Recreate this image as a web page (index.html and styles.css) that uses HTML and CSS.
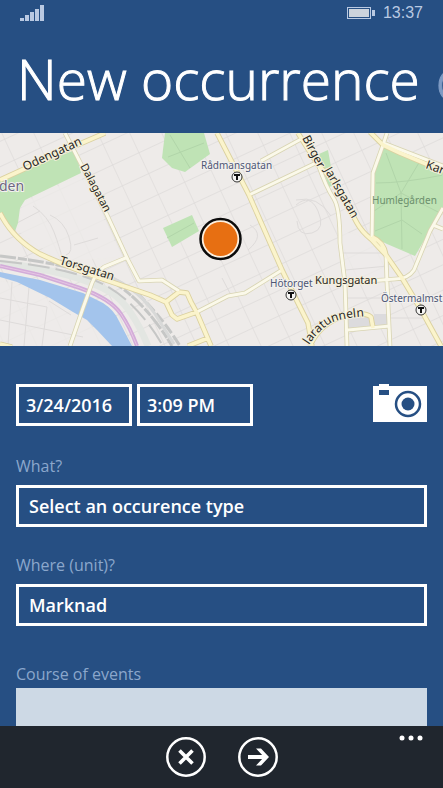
FILE: index.html
```html
<!DOCTYPE html>
<html lang="en">
<head>
  <meta charset="UTF-8">
  <meta name="viewport" content="width=device-width, initial-scale=1.0">
  <title>New occurrence</title>
  <link rel="stylesheet" href="styles.css">
</head>
<body>

  <div class="status">
    <svg width="24" height="17" viewBox="0 0 24 17" fill="#b9c9e2">
      <path d="M0 13h4v3H0zM5 10h4v6H5zM10 7h4v9h-4zM15 4h4v12h-4zM20 0h4v16h-4z"/>
    </svg>
    <div class="status-right">
      <svg width="28" height="12" viewBox="0 0 28 12">
        <rect x="0.5" y="0.5" width="23" height="11" fill="none" stroke="#b9c9e2"/>
        <rect x="2" y="2" width="20" height="8" fill="#ccd3dc"/>
        <rect x="25" y="3" width="3" height="6" fill="#b9c9e2"/>
      </svg>
      <span>13:37</span>
    </div>
  </div>

  <header class="pivot">
    <h1>New occurrence</h1>
    <span class="next">o</span>
  </header>

  <div class="map">
    <svg viewBox="0 0 443 213" preserveAspectRatio="xMidYMid slice">
      <defs>
        <pattern id="blocks" width="29" height="23" patternUnits="userSpaceOnUse" patternTransform="translate(4 6) rotate(-25)">
          <path d="M0 0H29M0 0V23" fill="none" stroke="#dedbda" stroke-width="1.4"/>
        </pattern>
        <path id="road-main" d="M0 47 22 37 75 13 105 0M0 80Q13 106 40 121Q70 135 100 145L150 162 166 169 179 159M217 0 249 62 282 137 297 168 308 190 312 213M298 0 318 32Q334 47 341 60L357 90Q362 99 371 106L386 122 402 145 420 175 441 213M370 -1 383 12 400 20 443 38M372 104Q384 109 386 122M310 213Q320 190 345 183Q364 178 371 184L373 195M179 159 187 160 191 169 197 180 211 213M166 169 172 182 177 186 197 179M188 213 208 205M0 211 12 214"/>
        <path id="road-side" d="M65 0 82 33 107 82 128 127 139 148 162 147 179 158M128 124 104 134Q96 140 92 150L83 175 70 213M197 179 228 163 245 160 282 137M249 62 320 28M261 28 303 5M318 31Q326 54 334 66Q340 76 340 110L345 150 347 213M387 0 383 12 373 40 372 104M383 10 443 33M443 75 430 98 414 137Q408 146 395 146L343 150M386 122 387 150 390 213M348 197 390 193M433 92 443 96"/>
      </defs>
      <rect width="443" height="213" fill="#eeebe9"/>
      <rect width="443" height="213" fill="url(#blocks)"/>
      <path d="M0 148 17 151 50 166 80 182 97 198 112 213H0zM22 70 80 43 106 90 122 124 60 128 18 98zM337 96 375 108 386 130V145H343z" fill="#eeebe9" fill-opacity=".75"/>
      <path d="M33 73Q48 83 54 99T62 125M50 82Q64 88 69 104T66 122M17 90 40 78M74 112 98 105M0 165 47 174 42 213M12 149 8 213M29 154 24 213M0 187 83 204M49 168 71 182M296 72Q310 60 318 78T312 100 297 88M250 92Q266 102 248 117M340 120H386M345 137 388 133M347 165H388M391 165H414M391 185H427M296 67Q318 62 331 83M222 145 232 164" fill="none" stroke="#dedbda"/>

      <g fill="#bfe3b5">
        <path d="M0 47 75 17 81 40 25 67 20 75 18 90 14 101 0 80z"/>
        <path d="M165 0H204L210 21 185 39 172 35 162 25z"/>
        <path d="M163 95 192 82 199 98 172 114z"/>
        <path d="M384 14 443 38V75L415 123 387 111 373 104 373 40z"/>
        <path d="M319 21 328 17 331 34 324 36zM323 37 330 38 335 52 329 54z"/>
      </g>
      <path d="M386 20 401 60 440 80M376 50Q404 50 443 42M374 78 401 60 420 28M375 98 402 87 422 101M401 60 402 116M170 2 190 35M168 24 204 10M167 105 194 90" fill="none" stroke="#b1d5a9"/>
      <path d="M348 183 370 181V194L348 196zM374 181H387V192H374z" fill="#dcdbdd"/>

      <path d="M0 139 40 147 83 160 103 170Q114 177 119 188L132 213H112L97 197 87 187 73 179 50 165 17 149 0 144z" fill="#a3c4ec"/>
      <path d="M0 130Q75 138 112 160Q132 174 148 213" fill="none" stroke="#e3e6e2" stroke-width="7"/>
      <g fill="none" stroke="#c6c7c6" stroke-width="3">
        <path d="M0 123Q75 132 110 147Q145 168 172 213" stroke-dasharray="16 2 9 1"/>
        <path d="M0 128Q72 135 105 152Q138 170 163 213" stroke-dasharray="22 6" stroke-width="2"/>
        <path d="M60 128Q116 142 138 161Q162 184 180 213" stroke-dasharray="11 3"/>
        <path d="M95 138Q135 151 155 181L174 211" stroke="#d8d9d8"/>
      </g>
      <path d="M0 133 40 142 80 155Q111 166 121 181Q130 194 137 213" fill="none" stroke="#d3acd9" stroke-width="4"/>
      <path d="M0 133 40 142 80 155Q111 166 121 181Q130 194 137 213" fill="none" stroke="#e6c6e4" stroke-width="1"/>

      <g fill="none" stroke-linejoin="round">
        <use href="#road-side" stroke="#d8d4b2" stroke-width="4.6"/>
        <use href="#road-main" stroke="#dbd1a0" stroke-width="5.4"/>
        <use href="#road-side" stroke="#fbf9ea" stroke-width="3"/>
        <use href="#road-main" stroke="#fbf4cc" stroke-width="3.6"/>
      </g>

      <g class="streets">
        <text transform="translate(25 38) rotate(-25)">Odengatan</text>
        <text transform="translate(80 33) rotate(62)" class="small">Dalagatan</text>
        <text transform="translate(59 131) rotate(17)">Torsgatan</text>
        <text transform="translate(302 5) rotate(62)">Birger</text>
        <text transform="translate(324 37) rotate(60)">Jarlsgatan</text>
        <text x="315" y="151" class="small">Kungsgatan</text>
        <text transform="translate(425 35) rotate(20)">Karl</text>
        <path id="tunnel" d="M309 212Q318 198 331 190Q343 184 374 183" fill="none" stroke="none"/>
        <text><textPath href="#tunnel">laratunneln</textPath></text>
      </g>
      <g class="places">
        <text x="-1" y="58" class="district">den</text>
        <text x="201" y="36">Rådmansgatan</text>
        <text x="270" y="154">Hötorget</text>
        <text x="381" y="169">Östermalmst</text>
        <text x="372" y="71" class="park">Humlegården</text>
      </g>

      <g fill="#f6f5f3" stroke="#333" stroke-width="1">
        <circle cx="237" cy="44" r="5"/>
        <circle cx="291" cy="162" r="5"/>
        <circle cx="421" cy="177" r="5"/>
        <path d="M234 42h6M237 42v5M288 160h6M291 160v5M418 175h6M421 175v5" stroke="#111" stroke-width="2"/>
      </g>

      <circle cx="220.5" cy="106" r="20" fill="#fdf0df" stroke="#0b0b0b" stroke-width="2.5"/>
      <circle cx="220.5" cy="106" r="17" fill="#e76f12"/>
    </svg>
  </div>

  <form class="form">
    <div class="when">
      <input type="text" value="3/24/2016" aria-label="Date">
      <input type="text" value="3:09 PM" aria-label="Time">
      <button type="button" class="camera" aria-label="Add photo">
        <svg width="54" height="39" viewBox="0 0 54 39">
          <path d="M0 2H6V0H16V2H54V38H0z" fill="#fff"/>
          <path d="M6 6h10v5H6z" fill="#264f83"/>
          <circle cx="35" cy="20" r="12" fill="none" stroke="#264f83" stroke-width="2.5"/>
          <circle cx="35" cy="20" r="6.5" fill="#264f83"/>
        </svg>
      </button>
    </div>

    <div class="field">
      <label for="what">What?</label>
      <select id="what"><option>Select an occurence type</option></select>
    </div>
    <div class="field">
      <label for="unit">Where (unit)?</label>
      <select id="unit"><option>Marknad</option></select>
    </div>
    <div class="field events">
      <label for="events">Course of events</label>
      <textarea id="events"></textarea>
    </div>
  </form>

  <footer class="appbar">
    <div class="actions">
      <button type="button" aria-label="Cancel">
        <svg width="40" height="40" viewBox="0 0 40 40" fill="none" stroke="#fff">
          <circle cx="20" cy="20" r="18.7" stroke-width="2.5"/>
          <path d="M13.5 13.5 26.5 26.5M26.5 13.5 13.5 26.5" stroke-width="3.6"/>
        </svg>
      </button>
      <button type="button" aria-label="Next">
        <svg width="40" height="40" viewBox="0 0 40 40" fill="none" stroke="#fff">
          <circle cx="20" cy="20" r="18.7" stroke-width="2.5"/>
          <path d="M10 20H28" stroke-width="4"/>
          <path d="M18 11.5H23L31 20 23 28.5H18L26 20z" fill="#fff" stroke="none"/>
        </svg>
      </button>
    </div>
    <button type="button" class="more" aria-label="More">
      <svg width="24" height="6" viewBox="0 0 24 6" fill="#fff">
        <circle cx="3" cy="3" r="2.5"/><circle cx="12" cy="3" r="2.5"/><circle cx="21" cy="3" r="2.5"/>
      </svg>
    </button>
  </footer>

</body>
</html>
```
FILE: styles.css
```css
* { box-sizing: border-box; }
body {
  margin: 0;
  height: 100vh;
  display: flex;
  flex-direction: column;
  overflow: hidden;
  background: #264f83;
  color: #fff;
  font-family: "Open Sans", "Noto Sans", sans-serif;
}
svg { display: block; }
button {
  padding: 0;
  border: none;
  background: none;
  cursor: pointer;
}

.status {
  display: flex;
  justify-content: space-between;
  align-items: center;
  flex: none;
  height: 26px;
  padding: 0 20px;
  color: #b9c9e2;
  font: 16px "Liberation Sans", sans-serif;
}
.status-right { display: flex; align-items: center; gap: 8px; }

.pivot {
  display: flex;
  flex: none;
  gap: 16px;
  height: 107px;
  padding-left: 17px;
  overflow: hidden;
  white-space: nowrap;
  font-size: 55px;
  font-weight: 300;
  line-height: 106px;
  -webkit-text-stroke: 1px currentColor;
}
.pivot h1 { margin: 0; font: inherit; }
.pivot .next { color: #7f9bc4; }

.map { flex: none; height: 213px; }
.map svg { width: 100%; height: 100%; }
.map text { font-family: "Noto Sans", sans-serif; }
.streets text {
  font-size: 12px;
  fill: #2b2925;
  stroke: #f5f0dc;
  stroke-width: 2px;
  paint-order: stroke;
}
.streets .small { font-size: 11px; }
.places text {
  font-size: 10px;
  fill: #4d5675;
  stroke: #f3f1ef;
  stroke-width: 2px;
  paint-order: stroke;
}
.places .district { font-size: 14px; fill: #6d6880; }
.places .park { fill: #6b8f6c; stroke: none; }

.form {
  flex: 1;
  min-height: 0;
  padding: 38px 16px 0;
  overflow: hidden;
}
.when { display: flex; align-items: flex-start; gap: 5px; margin-bottom: 30px; }
.form input,
.form select {
  height: 42px;
  border: 3px solid #fff;
  border-radius: 0;
  background: transparent;
  color: #fff;
  font: 600 18px "Open Sans", "Noto Sans", sans-serif;
  appearance: none;
}
.form input { width: 116px; padding: 0 7px; }
.form select { width: 100%; padding: 0 10px; }
.camera { margin-left: auto; }

.field {
  display: flex;
  flex-direction: column;
  gap: 9px;
  margin-bottom: 28px;
}
.field label { color: #8ba7cc; font-size: 16px; line-height: 20px; }
.events { gap: 4px; padding-top: 10px; }
.events textarea {
  height: 120px;
  border: none;
  border-radius: 0;
  background: #cdd9e5;
  resize: none;
}

.appbar {
  display: grid;
  grid-template-columns: 1fr auto 1fr;
  flex: none;
  height: 62px;
  padding: 0 20px;
  background: #20262e;
}
.actions { grid-column: 2; display: flex; align-items: center; gap: 32px; }
.more { justify-self: end; align-self: start; padding-top: 9px; }
```
